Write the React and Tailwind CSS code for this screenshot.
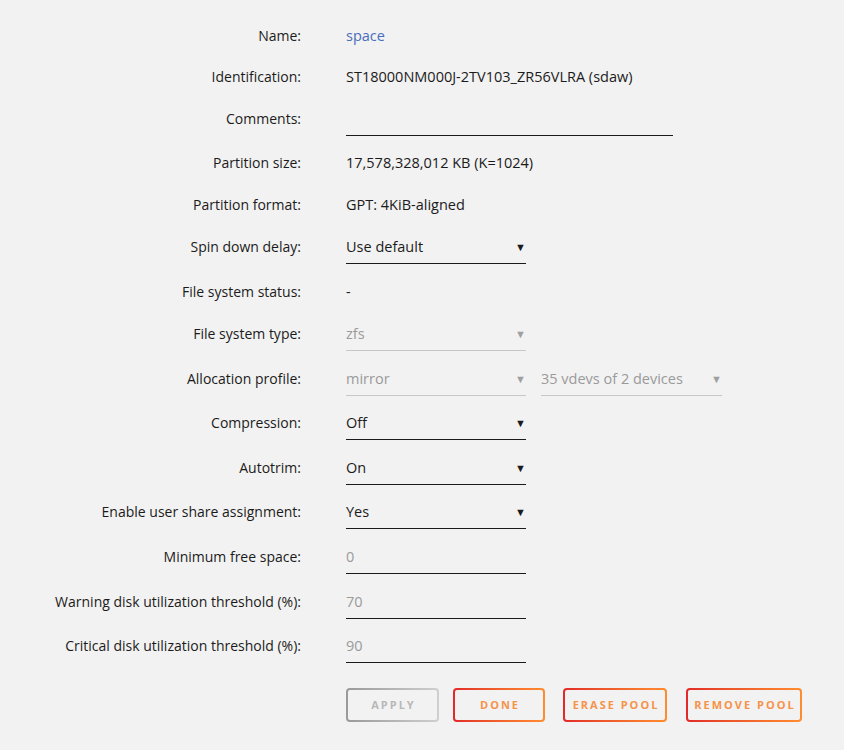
import React from 'react';

const font = { fontFamily: '"Open Sans", "Noto Sans", sans-serif' };

const Row = ({ label, h, children }) => (
  <div className={`flex items-start ${h}`}>
    <div className="w-[302px] shrink-0 pr-[1px] text-right text-[14px] leading-[20px] text-[#1c1b1b]">{label}</div>
    <div className="ml-[44px] text-[14.5px] leading-[20px] text-[#1c1b1b]">{children}</div>
  </div>
);

const Select = ({ value, disabled, w = 'w-[180px]' }) => (
  <div
    className={`flex h-[27px] ${w} items-start justify-between border-b ${
      disabled ? 'border-[#c7c7c7] text-[#9a9a9a]' : 'border-[#1c1b1b] text-[#1c1b1b]'
    }`}
  >
    <span>{value}</span>
    <span className={`text-[11px] leading-[20px] ${disabled ? 'text-[#a0a0a0]' : 'text-[#1c1b1b]'}`}>▼</span>
  </div>
);

const Input = ({ value, w = 'w-[180px]' }) => (
  <div className={`h-[27px] ${w} border-b border-[#1c1b1b] text-[#9a9a9a]`}>{value}</div>
);

const Button = ({ children, w, disabled }) => (
  <div
    className={`rounded-[4px] p-[2px] ${w} ${
      disabled ? 'bg-gradient-to-r from-[#9a9a9a] to-[#cfcfcf]' : 'bg-gradient-to-r from-[#e22828] to-[#ff8c2f]'
    }`}
  >
    <div
      className={`flex h-[30px] items-center justify-center rounded-[2px] bg-[#f2f2f2] pl-[2px] text-[11px] font-bold tracking-[2px] ${
        disabled ? 'text-[#b8b8b8]' : 'text-[#f5934a]'
      }`}
    >
      {children}
    </div>
  </div>
);

export default function App() {
  return (
    <div className="min-h-[750px] w-[844px] bg-[#f2f2f2] pt-[26px]" style={font}>
      <Row label="Name:" h="h-[41px]">
        <span className="text-[#486dba]">space</span>
      </Row>
      <Row label="Identification:" h="h-[42px]">ST18000NM000J-2TV103_ZR56VLRA (sdaw)</Row>
      <Row label="Comments:" h="h-[44px]">
        <Input value="" w="w-[327px]" />
      </Row>
      <Row label="Partition size:" h="h-[42px]">17,578,328,012 KB (K=1024)</Row>
      <Row label="Partition format:" h="h-[42px]">GPT: 4KiB-aligned</Row>
      <Row label="Spin down delay:" h="h-[45px]">
        <Select value="Use default" />
      </Row>
      <Row label="File system status:" h="h-[42px]">-</Row>
      <Row label="File system type:" h="h-[45px]">
        <Select value="zfs" disabled />
      </Row>
      <Row label="Allocation profile:" h="h-[44px]">
        <div className="flex gap-[15px]">
          <Select value="mirror" disabled />
          <Select value="35 vdevs of 2 devices" disabled w="w-[181px]" />
        </div>
      </Row>
      <Row label="Compression:" h="h-[45px]">
        <Select value="Off" />
      </Row>
      <Row label="Autotrim:" h="h-[44px]">
        <Select value="On" />
      </Row>
      <Row label="Enable user share assignment:" h="h-[45px]">
        <Select value="Yes" />
      </Row>
      <Row label="Minimum free space:" h="h-[45px]">
        <Input value="0" />
      </Row>
      <Row label="Warning disk utilization threshold (%):" h="h-[44px]">
        <Input value="70" />
      </Row>
      <Row label="Critical disk utilization threshold (%):" h="h-[52px]">
        <Input value="90" />
      </Row>
      <div className="ml-[346px] flex">
        <Button w="w-[93px]" disabled>APPLY</Button>
        <div className="ml-[14px]">
          <Button w="w-[92px]">DONE</Button>
        </div>
        <div className="ml-[18px]">
          <Button w="w-[104px]">ERASE POOL</Button>
        </div>
        <div className="ml-[19px]">
          <Button w="w-[116px]">REMOVE POOL</Button>
        </div>
      </div>
    </div>
  );
}
